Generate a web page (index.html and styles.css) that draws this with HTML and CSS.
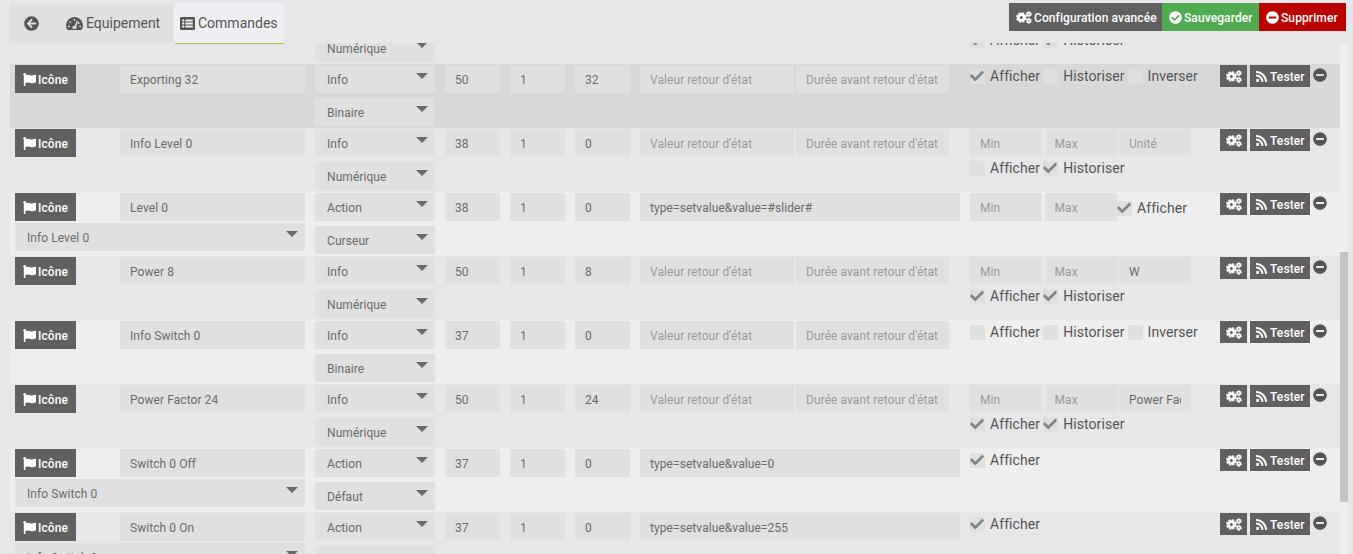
FILE: index.html
```html
<!DOCTYPE html>
<html lang="fr">
<head>
    <meta charset="UTF-8">
    <meta name="viewport" content="width=device-width, initial-scale=1.0">
    <title>Commandes</title>
    <link rel="stylesheet" href="styles.css">
</head>
<body>
    <svg class="sprite">
        <symbol id="i-back" viewBox="0 0 512 512"><path d="M256 504C119 504 8 393 8 256S119 8 256 8s248 111 248 248-111 248-248 248zm28.9-143.6L209.4 288H392c13.300 0 24-10.700 24-24v-16c0-13.300-10.700-24-24-24H209.400l75.500-72.400c9.700-9.300 9.900-24.800.4-34.300l-11-10.900c-9.400-9.400-24.600-9.400-33.900 0L107.700 239c-9.400 9.400-9.400 24.600 0 33.900l132.700 132.700c9.400 9.400 24.600 9.400 33.900 0l11-10.900c9.500-9.500 9.300-25-.4-34.300z"/></symbol>
        <symbol id="i-minus" viewBox="0 0 512 512"><path d="M256 8C119 8 8 119 8 256s111 248 248 248 248-111 248-248S393 8 256 8zM124 296c-6.600 0-12-5.400-12-12v-56c0-6.600 5.400-12 12-12h264c6.600 0 12 5.400 12 12v56c0 6.600-5.400 12-12 12H124z"/></symbol>
        <symbol id="i-ok" viewBox="0 0 512 512"><path d="M504 256c0 137-111 248-248 248S8 393 8 256 119 8 256 8s248 111 248 248zM227.300 387.300l184-184c6.300-6.200 6.300-16.400 0-22.600l-22.600-22.600c-6.300-6.300-16.400-6.300-22.600 0L216 308.100l-70-70c-6.300-6.300-16.400-6.300-22.700 0l-22.600 22.600c-6.300 6.200-6.300 16.400 0 22.600l104 104c6.200 6.300 16.400 6.300 22.600 0z"/></symbol>
        <symbol id="i-rss" viewBox="0 0 448 512"><path d="M128 416a64 64 0 1 1-128 0 64 64 0 0 1 128 0zm175.700 47.200C295.400 308.600 171.600 184.600 16.800 176.300 7.700 175.800 0 183.100 0 192.300v48c0 8.400 6.500 15.500 14.900 16 111.800 7.300 201.500 96.700 208.800 208.800.5 8.400 7.600 14.900 16 14.900h48c9.200 0 16.500-7.700 16-16.800zm144.300.3C439.600 229.700 251.500 40.400 16.500 32 7.500 31.700 0 39 0 48v48c0 8.700 6.800 15.700 15.500 16 191.100 7.900 344.600 161.400 352.400 352.500.4 8.700 7.400 15.500 16 15.500H432c9 0 16.300-7.500 16-16.500z"/></symbol>
        <symbol id="i-check" viewBox="0 0 512 512"><path d="M173.900 439.400L7.500 273c-10-10-10-26.200 0-36.200l36.200-36.200c10-10 26.200-10 36.200 0L192 312.700 432.100 72.600c10-10 26.200-10 36.200 0l36.200 36.200c10 10 10 26.200 0 36.200L210.100 439.400c-10 10-26.200 10-36.200 0z"/></symbol>
        <symbol id="i-flag" viewBox="0 0 512 512"><path d="M349.600 98.800C296 98.800 251.700 64 184.300 64c-24.900 0-47.300 4.400-68 12a56 56 0 0 0 3.600-23.500C118.100 24 94.800 1.200 66.300 0 34.300-1.300 8 24.300 8 56c0 19 9.500 35.800 24 45.900V488c0 13.300 10.700 24 24 24h16c13.300 0 24-10.700 24-24v-94.400c28.300-12.100 63.600-22.100 114.400-22.100 53.600 0 97.900 34.800 165.300 34.800 48.100 0 86.600-16.300 122.500-40.900 10.100-6 15.300-15.900 15.300-26.400V96c0-23.400-24.300-38.900-45.500-29.100-34.300 16-76.400 31.900-116.900 31.900z"/></symbol>
        <symbol id="i-cogs" viewBox="0 0 640 512">
            <g fill="none" stroke="currentColor">
                <circle cx="215" cy="256" r="116" stroke-width="108"/>
                <circle cx="215" cy="256" r="180" stroke-width="66" stroke-dasharray="90 51.400"/>
                <circle cx="512" cy="122" r="62" stroke-width="64"/>
                <circle cx="512" cy="122" r="102" stroke-width="38" stroke-dasharray="64 42.800"/>
                <circle cx="512" cy="390" r="62" stroke-width="64"/>
                <circle cx="512" cy="390" r="102" stroke-width="38" stroke-dasharray="64 42.800"/>
            </g>
        </symbol>
        <symbol id="i-tacho" viewBox="0 0 576 512"><path fill-rule="evenodd" d="M288 32C129 32 0 161 0 320c0 53 14 102 39 145 6 9 16 15 28 15h442c12 0 22-6 28-15 25-43 39-92 39-145C576 161 447 32 288 32zM288 96a32 32 0 1 1 0 64 32 32 0 0 1 0-64zM96 384a32 32 0 1 1 0-64 32 32 0 0 1 0 64zM144 240a32 32 0 1 1 0-64 32 32 0 0 1 0 64zM391 152c13 4 20 17 16 30l-61 184c19 18 23 42 12 66H218c-22-42 8-96 82-96l61-169c4-13 17-19 30-15zM432 208a32 32 0 1 1 0 64 32 32 0 0 1 0-64zM480 384a32 32 0 1 1 0-64 32 32 0 0 1 0 64z"/></symbol>
        <symbol id="i-list" viewBox="0 0 512 512"><path fill-rule="evenodd" d="M464 480H48c-26 0-48-22-48-48V80c0-26 22-48 48-48h416c26 0 48 22 48 48v352c0 26-22 48-48 48zM76 120v64h68v-64zM184 120v64h252v-64zM76 224v64h68v-64zM184 224v64h252v-64zM76 328v64h68v-64zM184 328v64h252v-64z"/></symbol>
    </svg>

    <header class="topbar">
        <nav class="tabs">
            <a class="tab tab-back"><svg><use href="#i-back"/></svg></a>
            <a class="tab"><svg class="wide"><use href="#i-tacho"/></svg>Equipement</a>
            <a class="tab active"><svg><use href="#i-list"/></svg>Commandes</a>
        </nav>
        <div class="actions">
            <a class="btn btn-config"><svg class="wide"><use href="#i-cogs"/></svg>Configuration avancée</a>
            <a class="btn btn-success"><svg><use href="#i-ok"/></svg>Sauvegarder</a>
            <a class="btn btn-danger"><svg><use href="#i-minus"/></svg>Supprimer</a>
        </div>
    </header>

    <main class="content">
        <div class="table" id="table_cmd"></div>
        <div class="scrollbar"><div class="thumb"></div></div>
    </main>

    <script>
        const F = 'Afficher', H = 'Historiser', I = 'Inverser';
        const cmds = [
            { name: 'Power 32', type: 'Info', sub: 'Numérique', ids: [50, 1, 32], unit: '', opts: [[F, 1], [H, 1]] },
            { name: 'Exporting 32', type: 'Info', sub: 'Binaire', ids: [50, 1, 32], opts: [[F, 1], [H, 0], [I, 0]], hover: true },
            { name: 'Info Level 0', type: 'Info', sub: 'Numérique', ids: [38, 1, 0], unit: '', opts: [[F, 0], [H, 1]] },
            { name: 'Level 0', type: 'Action', sub: 'Curseur', ids: [38, 1, 0], value: 'type=setvalue&value=#slider#', linked: 'Info Level 0', slider: true, opts: [[F, 1]] },
            { name: 'Power 8', type: 'Info', sub: 'Numérique', ids: [50, 1, 8], unit: 'W', opts: [[F, 1], [H, 1]] },
            { name: 'Info Switch 0', type: 'Info', sub: 'Binaire', ids: [37, 1, 0], opts: [[F, 0], [H, 0], [I, 0]] },
            { name: 'Power Factor 24', type: 'Info', sub: 'Numérique', ids: [50, 1, 24], unit: 'Power Factor', opts: [[F, 1], [H, 1]] },
            { name: 'Switch 0 Off', type: 'Action', sub: 'Défaut', ids: [37, 1, 0], value: 'type=setvalue&value=0', linked: 'Info Switch 0', opts: [[F, 1]] },
            { name: 'Switch 0 On', type: 'Action', sub: 'Défaut', ids: [37, 1, 0], value: 'type=setvalue&value=255', linked: 'Info Switch 0', opts: [[F, 1]] }
        ];

        function icon(name, cls) {
            return `<svg class="${cls || ''}"><use href="#i-${name}"/></svg>`;
        }

        function input(value, placeholder) {
            return `<input type="text" value="${String(value).replace(/&/g, '&amp;')}" placeholder="${placeholder || ''}">`;
        }

        function select(value) {
            return `<div class="select"><select><option>${value}</option></select></div>`;
        }

        function options(cmd) {
            const checks = cmd.opts.map(o =>
                `<label class="check"><span class="box">${o[1] ? icon('check') : ''}</span>${o[0]}</label>`).join('');
            const limits = input('', 'Min') + input('', 'Max');
            if (cmd.slider) {
                return `<div class="limits">${limits}${checks}</div>`;
            }
            if (cmd.unit !== undefined) {
                return `<div class="limits">${limits}${input(cmd.unit, 'Unité')}</div><div class="checks">${checks}</div>`;
            }
            return `<div class="checks">${checks}</div>`;
        }

        function row(cmd) {
            return `<div class="row${cmd.hover ? ' hover' : ''}">
                <div class="cell name">
                    <div class="name-line"><a class="btn btn-icon">${icon('flag')}Icône</a>${input(cmd.name)}</div>
                    ${cmd.linked ? select(cmd.linked) : ''}
                </div>
                <div class="cell type">${select(cmd.type)}${select(cmd.sub)}</div>
                ${cmd.ids.map(id => `<div class="cell">${input(id)}</div>`).join('')}
                <div class="cell params">${cmd.value ? input(cmd.value) : input('', "Valeur retour d'état") + input('', "Durée avant retour d'état")}</div>
                <div class="cell opts">${options(cmd)}</div>
                <div class="cell tools">
                    <a class="btn btn-xs">${icon('cogs', 'wide')}</a>
                    <a class="btn btn-xs btn-test">${icon('rss', 'rss')}Tester</a>
                    ${icon('minus', 'remove')}
                </div>
            </div>`;
        }

        document.getElementById('table_cmd').innerHTML = cmds.map(row).join('');
    </script>
</body>
</html>
```
FILE: styles.css
```css
* {
    box-sizing: border-box;
}
body {
    font-family: Roboto, sans-serif;
    font-size: 14px;
    color: #555;
    background-color: #e7e7e9;
    margin: 0;
    height: 554px;
    overflow: hidden;
    display: flex;
    flex-direction: column;
}
.sprite {
    display: none;
}
svg {
    fill: currentColor;
    color: inherit;
    width: 14px;
    height: 14px;
    flex: none;
}
.topbar {
    position: relative;
    z-index: 1;
    display: flex;
    justify-content: space-between;
    padding: 3px 7px 0 10px;
    height: 43px;
    flex: none;
}
.tabs {
    display: flex;
}
.tab {
    display: flex;
    align-items: center;
    gap: 3px;
    height: 40px;
    padding: 0 12px 0 13px;
    background-color: #dfe1e0;
}
.tab-back {
    padding: 0 14px;
    width: 43px;
}
.tab-back + .tab {
    width: 120px;
}
.tab svg {
    width: 15px;
    height: 15px;
}
.tab .wide {
    width: 17px;
}
.tab.active {
    width: 109px;
    height: 41px;
    padding: 0 5px;
    margin-left: 2px;
    background-color: #eeeff2;
    border-bottom: 1px solid #9bca3a;
}
.actions {
    display: flex;
}
.btn {
    display: flex;
    align-items: center;
    gap: 2px;
    height: 28px;
    padding: 1px 7px 0;
    font-size: 12px;
    letter-spacing: 0.1px;
    font-weight: 500;
    white-space: nowrap;
    color: #fff;
    background-color: #606060;
}
.btn svg {
    width: 13px;
    height: 13px;
}
.btn .wide {
    width: 16px;
}
.btn-config {
    width: 153px;
}
.btn-success {
    width: 97px;
    background-color: #50aa50;
}
.btn-danger {
    width: 87px;
    background-color: #ba0000;
}
.btn-icon {
    width: 61px;
    padding-left: 8px;
}
.content {
    display: flex;
    flex: 1;
    min-height: 0;
    margin: 0 5px 0 10px;
}
.table {
    flex: 1;
    overflow: hidden;
    display: flex;
    flex-direction: column;
    justify-content: flex-start;
}
.row {
    display: grid;
    grid-template-columns: 300px 130px 65px 65px 65px 330px 250px 1fr;
    height: 64px;
    flex: none;
    background-color: #e7e7e9;
}
/* the list is scrolled part way into its first row */
.row:first-child {
    margin-top: -43px;
}
.row:nth-child(even) {
    background-color: #eee;
}
.row.hover {
    background-color: #d8d8d8;
}
.cell {
    padding: 1px 5px 0;
    min-width: 0;
}
input, select {
    display: block;
    width: 100%;
    height: 28px;
    padding: 2px 10px 0;
    border: 0;
    border-radius: 0;
    font-family: inherit;
    font-size: 12px;
    letter-spacing: 0.07px;
    color: #6b6b6b;
    background-color: #dfe1e0;
    appearance: none;
}
input::placeholder {
    color: #999;
}
.select {
    position: relative;
}
select {
    padding: 2px 12px 0;
}
.select::after {
    content: "";
    position: absolute;
    top: 8px;
    right: 7px;
    border: 6px solid transparent;
    border-top-color: #6b6b6b;
    border-bottom: 0;
}
.name-line {
    display: flex;
    justify-content: space-between;
    margin-bottom: 2px;
}
.name-line input {
    width: 185px;
}
.type .select {
    margin-bottom: 5px;
}
.params {
    display: flex;
    gap: 2px;
}
.params input:nth-last-child(2) {
    width: 154px;
}
.params input:nth-child(2) {
    width: 153px;
}
.limits {
    display: flex;
    gap: 2.500px;
}
.limits input {
    width: 72px;
}
.limits .check {
    margin: 5px 0 0 -2px;
}
.checks {
    display: flex;
    gap: 3px;
    margin-top: 1px;
}
.check {
    display: flex;
    align-items: center;
    gap: 5px;
    height: 20px;
    letter-spacing: 0.08px;
}
.box {
    display: flex;
    width: 15px;
    height: 15px;
    background-color: #dfe1e0;
    color: #858585;
}
.hover .box {
    background-color: #dedfdf;
}
.tools {
    display: flex;
    align-items: flex-start;
    gap: 3px;
}
.btn-xs {
    width: 27px;
    height: 22px;
    padding: 0 5px 0 6px;
}
.btn-test {
    width: 60px;
    padding: 1px 6px 0;
    gap: 3px;
}
.btn .rss {
    width: 11px;
}
.tools .remove {
    margin-top: 3px;
}
.scrollbar {
    width: 8px;
    background-color: #f0f0f1;
}
.thumb {
    height: 250px;
    margin-top: 209px;
    background-color: #c3c3c3;
}
```
